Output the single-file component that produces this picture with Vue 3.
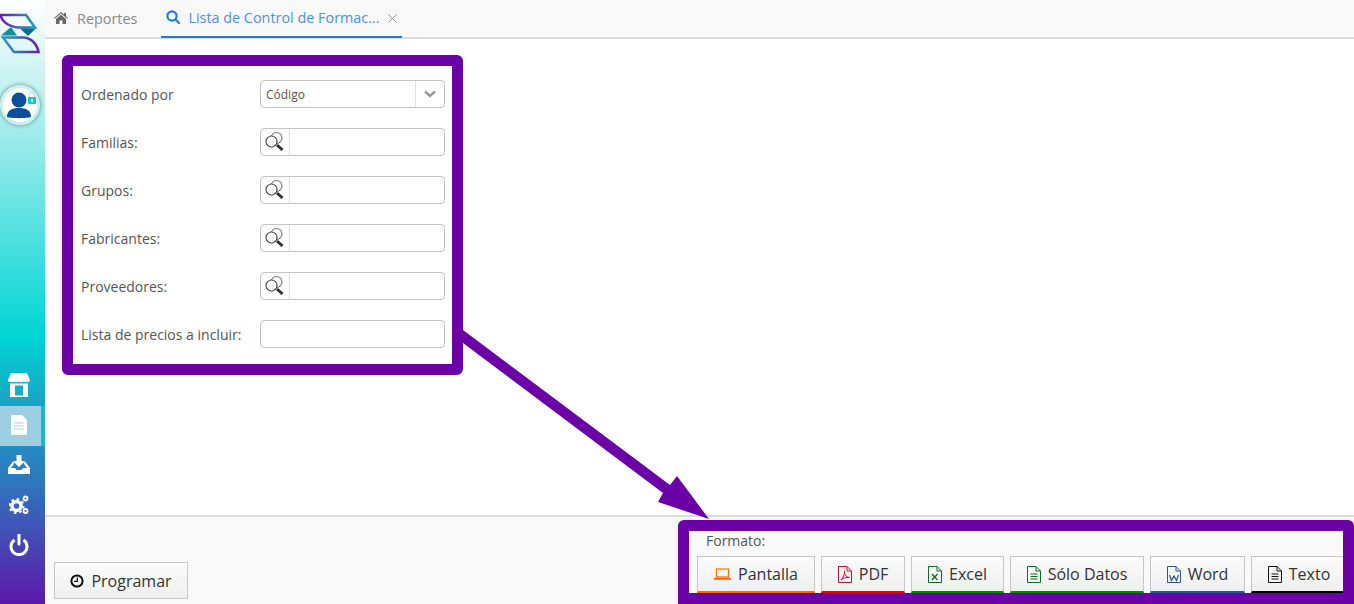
<script setup>
const fields = [
  { label: 'Familias:', type: 'lookup' },
  { label: 'Grupos:', type: 'lookup' },
  { label: 'Fabricantes:', type: 'lookup' },
  { label: 'Proveedores:', type: 'lookup' },
  { label: 'Lista de precios a incluir:', type: 'text' }
];

const formats = [
  { label: 'Pantalla', width: 118, color: '#ff6a00', icon: 'laptop' },
  { label: 'PDF', width: 84, color: '#f00000', icon: 'pdf' },
  { label: 'Excel', width: 93, color: '#008a00', icon: 'excel' },
  { label: 'Sólo Datos', width: 134, color: '#008a00', icon: 'datos' },
  { label: 'Word', width: 95, color: '#2b579a', icon: 'word' },
  { label: 'Texto', width: 96, color: '#000000', icon: 'texto' }
];
</script>

<template>
  <div class="page">
    <aside class="sidebar">
      <svg class="logo" width="42" height="42" viewBox="0 0 42 42">
        <defs>
          <linearGradient id="lg1" x1="0" y1="0" x2="1" y2="0">
            <stop offset="0" stop-color="#6a1fa8" />
            <stop offset="1" stop-color="#1f9fc0" />
          </linearGradient>
          <linearGradient id="lg2" x1="0" y1="0" x2="1" y2="0">
            <stop offset="0" stop-color="#1f9fc0" />
            <stop offset="1" stop-color="#6a1fa8" />
          </linearGradient>
        </defs>
        <path d="M1.500 3H27L36 15.500H21C12 15.500 3.500 11 1.500 3Z" fill="none" stroke="url(#lg1)" stroke-width="2.500" />
        <path d="M4 25.500H24C32 25.500 38 32 39.500 40H15Z" fill="none" stroke="url(#lg2)" stroke-width="2.500" />
        <path d="M2 23.500L12 15L18 23.500Z" fill="#0e8f9f" />
        <path d="M21 16.500H37L29 24Z" fill="#0d7088" />
      </svg>

      <div class="avatar">
        <svg width="30" height="30" viewBox="0 0 30 30">
          <circle cx="14" cy="10" r="7.500" fill="#0b4f9c" />
          <path d="M2 27C2 20 7 18 14 18S26 20 26 27C22 28.500 6 28.500 2 27Z" fill="#0b4f9c" />
        </svg>
        <span class="avatar__lock"></span>
      </div>

      <nav class="menu">
        <div class="menu__item">
          <svg width="22" height="24" viewBox="0 0 22 24" fill="#fff">
            <path d="M3 0H19L22 7C22 9 20 9.500 19 8.500C18 9.500 16 9.500 15 8.500C14 9.500 12 9.500 11 8.500C10 9.500 8 9.500 7 8.500C6 9.500 4 9.500 3 8.500C2 9.500 0 9 0 7Z" />
            <path fill-rule="evenodd" d="M2 10.500H20V24H2ZM7 12.500V22.500H15V12.500Z" />
          </svg>
        </div>
        <div class="menu__item menu__item--active">
          <svg width="16" height="20" viewBox="0 0 16 20">
            <path d="M0 0H11L16 5V20H0Z" fill="#fff" />
            <path d="M3 8H13M3 11H13M3 14H13" stroke="#a9d3e4" stroke-width="1.200" />
          </svg>
        </div>
        <div class="menu__item">
          <svg width="22" height="20" viewBox="0 0 22 20" fill="#fff">
            <path d="M8.500 0H13.500V6H17L11 12L5 6H8.500Z" />
            <path d="M5 6.500L0 13V19H22V13L17 6.500L15.500 8L19 13H15L13.500 15H8.500L7 13H3L6.500 8Z" />
          </svg>
        </div>
        <div class="menu__item">
          <svg width="20" height="20" viewBox="0 0 20 20">
            <circle cx="7.500" cy="11" r="4.500" fill="none" stroke="#fff" stroke-width="3.500" />
            <circle cx="7.500" cy="11" r="7" fill="none" stroke="#fff" stroke-width="2" stroke-dasharray="2.500 3" />
            <circle cx="16.500" cy="3.500" r="2" fill="none" stroke="#fff" stroke-width="1.800" />
            <circle cx="16.500" cy="16" r="2" fill="none" stroke="#fff" stroke-width="1.800" />
          </svg>
        </div>
        <div class="menu__item">
          <svg width="20" height="22" viewBox="0 0 20 22" fill="none" stroke="#fff" stroke-width="3">
            <path d="M5.500 6A8 8 0 1 0 14.500 6" />
            <path d="M10 0V10" stroke-linecap="round" />
          </svg>
        </div>
      </nav>
    </aside>

    <main class="main">
      <header class="tabs">
        <div class="tab">
          <svg width="14" height="12" viewBox="0 0 14 12" fill="#666">
            <path d="M7 0L10 2.600V1H12V4.300L14 6L13.300 6.800L7 1.500L.7 6.800L0 6L7 0Z" />
            <path d="M2 7L7 2.800L12 7V12H8.500V8.500H5.500V12H2Z" />
          </svg>
          <span>Reportes</span>
        </div>
        <div class="tab tab--active">
          <svg width="14" height="14" viewBox="0 0 14 14" fill="none" stroke="#1a7be0" stroke-width="2.200">
            <circle cx="6" cy="6" r="4.600" />
            <path d="M9.500 9.500L13 13" stroke-linecap="round" />
          </svg>
          <span class="tab__title">Lista de Control de Formac...</span>
          <svg class="tab__close" width="9" height="9" viewBox="0 0 9 9" stroke="#999" stroke-width="1">
            <path d="M.5 .5L8.500 8.500M8.500 .5L.5 8.500" />
          </svg>
        </div>
      </header>

      <section class="content">
        <form class="filters">
          <div class="filters__row">
            <label>Ordenado por</label>
            <div class="control">
              <span class="control__value">Código</span>
              <span class="control__arrow">
                <svg width="12" height="8" viewBox="0 0 12 8" fill="none" stroke="#999" stroke-width="2.400">
                  <path d="M1 1.500L6 6L11 1.500" />
                </svg>
              </span>
            </div>
          </div>
          <div v-for="field in fields" :key="field.label" class="filters__row">
            <label>{{ field.label }}</label>
            <div class="control">
              <span v-if="field.type === 'lookup'" class="control__lookup">
                <svg width="22" height="22" viewBox="0 0 22 22" fill="none">
                  <circle cx="12.500" cy="7" r="5.500" stroke="#777" stroke-width="1.100" />
                  <circle cx="7.500" cy="10.500" r="5.500" fill="#fff" stroke="#444" stroke-width="1.200" />
                  <path d="M13 14L18.500 19" stroke="#333" stroke-width="3" />
                </svg>
              </span>
            </div>
          </div>
        </form>

        <svg class="arrow" width="246" height="189" viewBox="0 0 246 189">
          <path d="M0 0L207 155L214 146L246 189L195 172L200 163L0 13Z" fill="#6a00a6" />
        </svg>
      </section>

      <footer class="footer">
        <button class="btn btn--schedule" type="button">
          <svg width="14" height="14" viewBox="0 0 14 14" fill="none" stroke="#111">
            <circle cx="7" cy="7" r="5.600" stroke-width="2" />
            <path d="M7.300 3.500V7.400H4" stroke-width="1.300" />
          </svg>
          Programar
        </button>

        <div class="format">
          <div class="format__inner">
            <div class="format__label">Formato:</div>
            <div class="format__buttons">
              <button
                v-for="item in formats"
                :key="item.label"
                class="btn btn--format"
                type="button"
                :style="{ width: item.width + 'px', flexBasis: item.width + 'px', borderBottomColor: item.color }"
              >
                <svg v-if="item.icon === 'laptop'" width="17" height="12" viewBox="0 0 17 12" fill="none" stroke="#ff6a00">
                  <rect x="2.500" y="1" width="12" height="8" stroke-width="1.200" />
                  <path d="M0 10.800H17" stroke-width="2" />
                </svg>
                <svg v-else width="14" height="17" viewBox="0 0 14 17" fill="none" :stroke="item.icon === 'texto' ? '#111' : item.icon === 'word' ? '#2b579a' : item.icon === 'pdf' ? '#c8102e' : '#0a6e1e'" stroke-width="1">
                  <path d="M.5 .5H9L13.500 5V16.500H.5Z" />
                  <path d="M9 .5V5H13.500" />
                  <path v-if="item.icon === 'pdf'" d="M3 14C5 12 7 8 6.500 5C6.500 9 8 11 11.500 11.500C8 11 5 12 3 14Z" />
                  <path v-if="item.icon === 'excel'" d="M4 8L9.500 14M9.500 8L4 14" stroke-width="1.300" />
                  <path v-if="item.icon === 'word'" d="M2.500 9L4.500 14.500L7 10L9.500 14.500L11.500 9" stroke-width="1.200" />
                  <path v-if="item.icon === 'datos' || item.icon === 'texto'" d="M3.500 8H10.500M3.500 10.500H10.500M3.500 13H10.500" />
                </svg>
                {{ item.label }}
              </button>
            </div>
          </div>
        </div>
      </footer>
    </main>
  </div>
</template>

<style>
html,
body {
  margin: 0;
  overflow: hidden;
}
</style>

<style scoped>
.page {
  display: flex;
  width: 1354px;
  height: 604px;
  overflow: hidden;
  font-family: "Open Sans", sans-serif;
  color: #555;
  background: #fff;
}

.sidebar {
  position: relative;
  flex: 0 0 45px;
  display: flex;
  flex-direction: column;
  background: linear-gradient(180deg, #ffffff 0%, #b5eeee 18%, #00d4d4 56%, #17a7c6 66%, #2f76bd 80%, #5c18ab 100%);
}

.logo {
  margin-top: 12px;
  margin-left: -1px;
}

.avatar {
  position: relative;
  box-sizing: border-box;
  width: 40px;
  height: 40px;
  margin-top: 31px;
  border-radius: 50%;
  background: #fff;
  border: 3px solid #c9f2f0;
  box-shadow: 0 0 4px #5f8585;
  display: flex;
  justify-content: center;
  align-items: center;
}

.avatar__lock {
  position: absolute;
  top: 9px;
  right: 1px;
  width: 8px;
  height: 7px;
  border-radius: 1px;
  background: #0cc8cc;
}

.avatar__lock::before {
  content: "";
  position: absolute;
  left: 1px;
  top: -5px;
  width: 4px;
  height: 4px;
  border: 1px solid #a7e6e6;
  border-bottom: 0;
  border-radius: 3px 3px 0 0;
}

.avatar__lock::after {
  content: "";
  position: absolute;
  left: 3px;
  top: 2px;
  width: 2px;
  height: 3px;
  background: #fff;
}

.menu {
  margin-top: 241px;
  display: flex;
  flex-direction: column;
}

.menu__item {
  box-sizing: border-box;
  height: 40px;
  width: 45px;
  padding-right: 8px;
  padding-left: 0;
  padding-bottom: 2px;
  display: flex;
  align-items: center;
  justify-content: center;
}

.menu__item--active {
  background: #9ccfe2;
  border-right: 4px solid #14bac9;
  padding-right: 4px;
}

.main {
  flex: 1;
  display: flex;
  flex-direction: column;
  min-width: 0;
}

.tabs {
  box-sizing: border-box;
  height: 39px;
  flex: 0 0 39px;
  display: flex;
  padding-left: 1px;
  background: #f9f9f9;
  border-bottom: 2px solid #dcdcdc;
}

.tab {
  display: flex;
  align-items: center;
  gap: 9px;
  height: 38px;
  box-sizing: border-box;
  padding: 0 8px 2px 8px;
  margin-right: 15px;
  font-size: 14.400px;
  color: #8a8a8a;
  white-space: nowrap;
}

.tab--active {
  flex: 0 0 241px;
  gap: 8px;
  padding-left: 5px;
  padding-right: 0;
  margin-right: 0;
  margin-left: 1px;
  color: #4f8fe6;
  border-bottom: 2px solid #1a7be0;
}

.tab__close {
  margin-left: 0;
  margin-top: 2px;
}

.content {
  position: relative;
  flex: 1;
}

.filters {
  box-sizing: border-box;
  width: 401px;
  height: 320px;
  margin: 16px 0 0 17px;
  padding: 14px 7px 0 8px;
  border: 11px solid #6a00a6;
  border-radius: 6px;
  background: #fff;
  display: flex;
  flex-direction: column;
  gap: 20px;
}

.filters__row {
  display: flex;
  align-items: center;
  height: 28px;
  font-size: 14px;
  color: #555;
}

.filters__row label {
  flex: 0 0 179px;
}

.control {
  box-sizing: border-box;
  flex: 0 0 185px;
  height: 28px;
  display: flex;
  align-items: stretch;
  background: #fff;
  border: 1px solid #c4c4c4;
  border-radius: 4px;
}

.control__value {
  flex: 1;
  padding-left: 5px;
  font-size: 12px;
  line-height: 28px;
}

.control__arrow {
  flex: 0 0 28px;
  display: flex;
  align-items: center;
  justify-content: center;
  border-left: 1px solid #e0e0e0;
}

.control__lookup {
  flex: 0 0 28px;
  display: flex;
  align-items: center;
  justify-content: center;
  border-right: 1px solid #e0e0e0;
}

.arrow {
  position: absolute;
  top: 291px;
  left: 418px;
  overflow: visible;
}

.footer {
  box-sizing: border-box;
  flex: 0 0 89px;
  display: flex;
  justify-content: space-between;
  align-items: flex-end;
  background: #f9f9f9;
  border-top: 2px solid #dcdcdc;
  padding-left: 9px;
}

.btn {
  box-sizing: border-box;
  display: flex;
  align-items: center;
  justify-content: center;
  gap: 7px;
  height: 37px;
  font-family: inherit;
  font-size: 16px;
  color: #333;
  background: linear-gradient(180deg, #fbfbfb, #efefef);
  border: 1px solid #c6c6c6;
  border-radius: 0;
  padding: 0;
}

.btn--schedule {
  width: 134px;
  margin-bottom: 5px;
}

.format {
  box-sizing: border-box;
  width: 676px;
  height: 84px;
  border: 11px solid #6a00a6;
  border-right-width: 11px;
  border-radius: 6px 6px 0 0;
  border-bottom-width: 11px;
}

.format__inner {
  height: 62px;
  overflow: hidden;
}

.format__label {
  height: 25px;
  padding-left: 17px;
  font-size: 14px;
  line-height: 20px;
  color: #555;
}

.format__buttons {
  display: flex;
  gap: 6px;
  padding-left: 8px;
}

.btn--format {
  flex-shrink: 0;
  border-bottom-width: 2px;
}
</style>
